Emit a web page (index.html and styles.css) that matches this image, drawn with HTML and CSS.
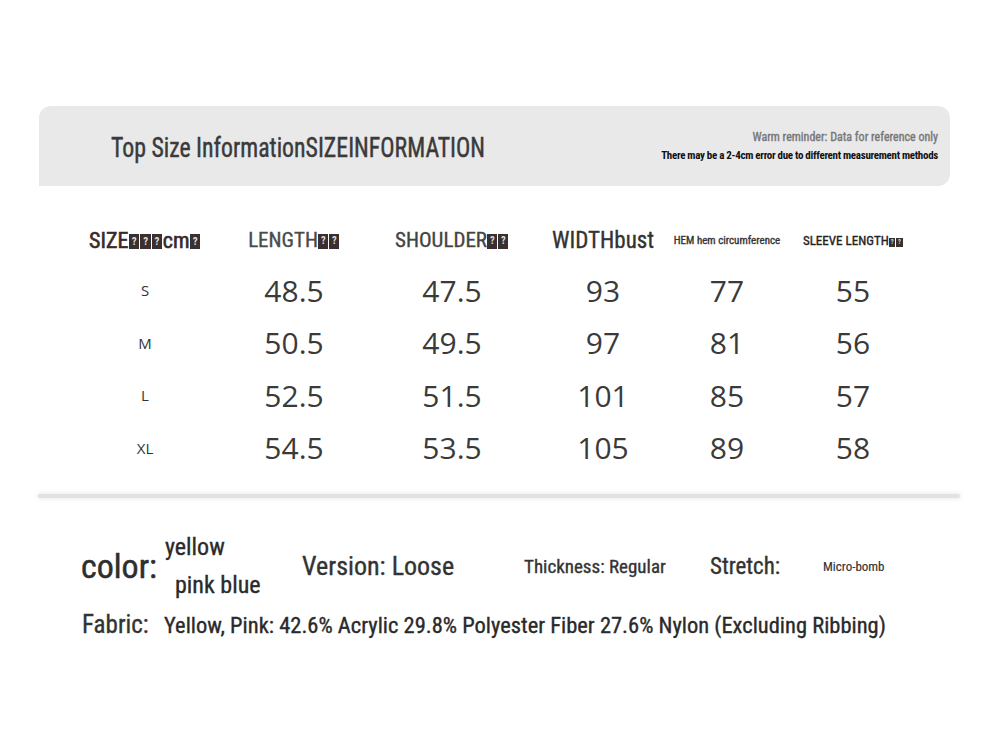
FILE: index.html
```html
<!DOCTYPE html>
<html>
<head>
<meta charset="utf-8">
<link rel="stylesheet" href="styles.css">
</head>
<body>
<div class="page">
  <div class="banner">
    <h1 class="title">Top Size InformationSIZEINFORMATION</h1>
    <div class="reminder">
      <div class="rem1">Warm reminder: Data for reference only</div>
      <div class="rem2">There may be a 2-4cm error due to different measurement methods</div>
    </div>
  </div>

  <div class="table">
    <div class="th th-size">SIZE<span class="qm">?</span><span class="qm">?</span><span class="qm">?</span>cm<span class="qm">?</span></div>
    <div class="th th-length">LENGTH<span class="qm">?</span><span class="qm">?</span></div>
    <div class="th th-shoulder">SHOULDER<span class="qm">?</span><span class="qm">?</span></div>
    <div class="th th-width">WIDTHbust</div>
    <div class="th th-hem">HEM hem circumference</div>
    <div class="th th-sleeve">SLEEVE LENGTH<span class="qm">?</span><span class="qm">?</span></div>

    <div class="sz">S</div><div class="num">48.5</div><div class="num">47.5</div><div class="num">93</div><div class="num">77</div><div class="num">55</div>
    <div class="sz">M</div><div class="num">50.5</div><div class="num">49.5</div><div class="num">97</div><div class="num">81</div><div class="num">56</div>
    <div class="sz">L</div><div class="num">52.5</div><div class="num">51.5</div><div class="num">101</div><div class="num">85</div><div class="num">57</div>
    <div class="sz">XL</div><div class="num">54.5</div><div class="num">53.5</div><div class="num">105</div><div class="num">89</div><div class="num">58</div>
  </div>

  <div class="divider"></div>

  <div class="info">
    <div class="info-row">
      <div class="color-label">color:</div>
      <div class="color-values">
        <div class="cv1">yellow</div>
        <div class="cv2">pink blue</div>
      </div>
      <div class="version">Version: Loose</div>
      <div class="thickness">Thickness: Regular</div>
      <div class="stretch">Stretch:</div>
      <div class="micro">Micro-bomb</div>
    </div>
    <div class="fabric-row">
      <div class="fabric-label">Fabric:</div>
      <div class="fabric-value">Yellow, Pink: 42.6% Acrylic 29.8% Polyester Fiber 27.6% Nylon (Excluding Ribbing)</div>
    </div>
  </div>
</div>
</body>
</html>
```

FILE: styles.css
```css
* { box-sizing: border-box; margin: 0; padding: 0; }
html, body { background: #fff; }
body {
  width: 982px;
  height: 737px;
  overflow: hidden;
  font-family: "Roboto Condensed", "Liberation Sans Narrow", "DejaVu Sans Condensed", sans-serif;
  color: #333;
  -webkit-text-stroke: 0.35px currentColor;
}
.page { padding-top: 106px; }

.banner {
  margin-left: 39px;
  width: 911px;
  height: 80px;
  background: #e9e9e9;
  border-radius: 12px 12px 12px 0;
  display: flex;
  align-items: center;
  justify-content: space-between;
  padding: 0 12px 0 72px;
}
.title {
  font-weight: 400;
  font-size: 28px;
  color: #3a3a3a;
  margin-top: 2px;
  white-space: nowrap;
  transform: scaleX(0.85);
  transform-origin: left center;
  -webkit-text-stroke: 0.45px currentColor;
}
.reminder { text-align: right; }
.rem1 { font-size: 12px; color: #777; line-height: 19px; }
.rem2 { font-size: 11px; color: #111; font-weight: 700; line-height: 18px; letter-spacing: -0.3px; -webkit-text-stroke: 0; }

.table {
  margin-left: 70px;
  margin-top: 31px;
  display: grid;
  grid-template-columns: 150px 148px 168px 134px 114px 138px;
  grid-template-rows: 47px repeat(4, 52.5px);
  align-items: center;
  justify-items: center;
}
.th { white-space: nowrap; line-height: 1; }
.th-size { font-size: 22px; color: #3a2a2a; -webkit-text-stroke: 0.6px currentColor; }
.th-length { font-size: 21px; color: #4a4a4a; }
.th-shoulder { font-size: 21px; color: #444; }
.th-width { font-size: 23px; color: #333; }
.th-hem { font-size: 11px; color: #333; }
.th-sleeve { font-size: 13px; color: #222; }
.qm {
  display: inline-block;
  background: #3a3030;
  color: #ddd;
  font-size: 0.5em;
  width: 0.95em;
  height: 1.4em;
  line-height: 1.4em;
  text-align: center;
  vertical-align: 3px;
  margin: 0 0.5px;
  font-weight: 700;
  -webkit-text-stroke: 0;
}
.th-sleeve .qm { vertical-align: 1px; }
.sz { font-family: "Open Sans", sans-serif; font-size: 15px; color: #333; -webkit-text-stroke: 0; }
.num { font-family: "Open Sans", sans-serif; font-size: 30px; color: #3a3a3a; -webkit-text-stroke: 0; }

.divider {
  margin: 20px 0 0 38px;
  width: 922px;
  height: 4px;
  background: #e2e2e2;
  box-shadow: 0 0 4px 1px #ececec;
  border-radius: 2px;
}

.info { padding-left: 81px; margin-top: 33px; }
.info-row { display: flex; align-items: center; height: 70px; }
.color-label { flex: 0 0 84px; font-size: 34px; color: #2e2e2e; -webkit-text-stroke: 0.5px currentColor; }
.color-values { flex: 0 0 137px; font-size: 24px; color: #2a2a2a; line-height: 38px; }
.cv2 { padding-left: 10px; }
.version { flex: 0 0 222px; font-size: 26px; color: #333; }
.thickness { flex: 0 0 186px; font-size: 19px; color: #333; }
.stretch { flex: 0 0 113px; font-size: 23px; color: #333; }
.micro { font-size: 13px; color: #333; -webkit-text-stroke: 0.15px currentColor; }

.fabric-row { display: flex; align-items: baseline; margin-top: 9px; }
.fabric-label { flex: 0 0 83px; font-size: 25px; color: #333; padding-left: 1px; }
.fabric-value { font-size: 22.5px; color: #2a2a2a; white-space: nowrap; }
```
